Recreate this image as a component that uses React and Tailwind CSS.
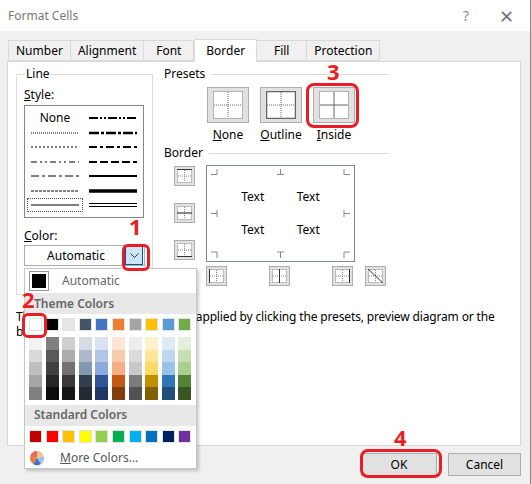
import React from "react";

const font = { fontFamily: '"Segoe UI", "Noto Sans", "Open Sans", sans-serif' };

const THEME = ["#ffffff", "#000000", "#e7e6e6", "#44546a", "#4472c4", "#ed7d31", "#a5a5a5", "#ffc000", "#5b9bd5", "#70ad47"];
const SHADES = [
  ["#f2f2f2", "#d9d9d9", "#bfbfbf", "#a6a6a6", "#808080"],
  ["#7f7f7f", "#595959", "#404040", "#262626", "#0d0d0d"],
  ["#d0cece", "#aeabab", "#767171", "#3b3838", "#171616"],
  ["#d6dce4", "#adb9ca", "#8497b0", "#333f4f", "#222b35"],
  ["#d9e1f2", "#b4c6e7", "#8ea9db", "#305496", "#203764"],
  ["#fce4d6", "#f8cbad", "#f4b084", "#c65911", "#833c0c"],
  ["#ededed", "#dbdbdb", "#c9c9c9", "#7b7b7b", "#525252"],
  ["#fff2cc", "#ffe699", "#ffd966", "#bf8f00", "#806000"],
  ["#ddebf7", "#bdd7ee", "#9bc2e6", "#2f75b5", "#1f4e78"],
  ["#e2efda", "#c6e0b4", "#a9d08e", "#548235", "#375623"],
];
const STANDARD = ["#c00000", "#ff0000", "#ffc000", "#ffff00", "#92d050", "#00b050", "#00b0f0", "#0070c0", "#002060", "#7030a0"];

const TABS = ["Number", "Alignment", "Font", "Border", "Fill", "Protection"];

// left and right columns of the line style list
const LEFT = [null, ["1 1", 1], ["2 2", 1], ["6 3 2 3 2 3", 1], ["8 3 3 3", 1], ["3 1", 1], ["", 1]];
const RIGHT = [["9 2 2 2 2 2", 2], ["10 2 3 2", 2.5], ["8 3 3 3", 2], ["8 3", 2], ["", 2], ["", 3.5], ["double", 1]];

function StyleLine({ spec }) {
  if (!spec) return <span className="block w-full text-center text-[12px] leading-none">None</span>;
  const [dash, w] = spec;
  if (dash === "double")
    return (
      <svg width="48" height="6">
        <line x1="0" y1="1.5" x2="48" y2="1.5" stroke="#000" strokeWidth="1" />
        <line x1="0" y1="4.5" x2="48" y2="4.5" stroke="#000" strokeWidth="1" />
      </svg>
    );
  return (
    <svg width="48" height="6">
      <line x1="0" y1="3" x2="48" y2="3" stroke="#000" strokeWidth={w} strokeDasharray={dash || undefined} />
    </svg>
  );
}

function Preset({ kind }) {
  const outline = kind === "outline";
  const inside = kind === "inside";
  return (
    <div className="w-[42px] h-[36px] bg-[#e1e1e1] border border-[#adadad] flex items-center justify-center">
      <svg width="30" height="28">
        <rect x="0.5" y="0.5" width="29" height="27" fill="#fff" stroke={outline ? "#666" : "#777"} strokeWidth={outline ? 1.5 : 1} strokeDasharray={outline ? undefined : "1 1"} />
        <line x1="15" y1="1" x2="15" y2="27" stroke="#666" strokeDasharray={inside ? undefined : "1 1"} />
        <line x1="1" y1="14" x2="29" y2="14" stroke="#666" strokeDasharray={inside ? undefined : "1 1"} />
      </svg>
    </div>
  );
}

function SideBtn({ line }) {
  return (
    <div className="w-[21px] h-[20px] bg-[#e1e1e1] border border-[#adadad] flex items-center justify-center">
      <svg width="15" height="14">
        <rect x="0.5" y="0.5" width="14" height="13" fill="#fff" stroke="#888" strokeDasharray="1 1" />
        <line x1="7.5" y1="1" x2="7.5" y2="13" stroke="#888" strokeDasharray="1 1" />
        <line x1="1" y1="7" x2="14" y2="7" stroke="#888" strokeDasharray="1 1" />
        {line === "top" && <line x1="0" y1="0.5" x2="15" y2="0.5" stroke="#333" />}
        {line === "mid" && <line x1="0" y1="7" x2="15" y2="7" stroke="#333" />}
        {line === "bottom" && <line x1="0" y1="13.5" x2="15" y2="13.5" stroke="#333" />}
        {line === "left" && <line x1="0.5" y1="0" x2="0.5" y2="14" stroke="#333" />}
        {line === "center" && <line x1="7.5" y1="0" x2="7.5" y2="14" stroke="#333" />}
        {line === "right" && <line x1="14.5" y1="0" x2="14.5" y2="14" stroke="#333" />}
        {line === "diag" && <line x1="0" y1="0" x2="15" y2="14" stroke="#333" />}
      </svg>
    </div>
  );
}

// little corner/tick marks around the preview box
function Tick({ d, cls }) {
  return (
    <svg width="7" height="7" className={`absolute ${cls}`}>
      <path d={d} fill="none" stroke="#888" />
    </svg>
  );
}

function Swatch({ c }) {
  return <div className="w-[13px] h-[13px] border border-[#e2e2e2]" style={{ background: c }} />;
}

export default function App() {
  return (
    <div className="relative w-[531px] h-[484px] bg-[#f0f0f0] text-[12px] text-black overflow-hidden border-r border-[#888]" style={font}>
      {/* title bar */}
      <div className="h-[31px] bg-white flex items-center pl-[8px] pr-[16px]">
        <span className="text-[12px] text-[#777]">Format Cells</span>
        <span className="ml-auto text-[14px] text-[#888]">?</span>
        <span className="ml-[30px] text-[18px] text-[#777] font-light leading-none">✕</span>
      </div>

      <div className="pl-[7px] pr-[9px] pt-[7px]">
        {/* tabs */}
        <div className="flex items-end h-[23px] pl-[1px]">
          {TABS.map((t) =>
            t === "Border" ? (
              <div key={t} className="h-[23px] px-[11px] bg-white border border-b-0 border-[#d9d9d9] -mb-[1px] relative z-10 flex items-center">{t}</div>
            ) : (
              <div key={t} className="h-[21px] px-[7px] border border-[#d9d9d9] border-l-0 first:border-l bg-[#f0f0f0] flex items-center min-w-[50px] justify-center">{t}</div>
            )
          )}
        </div>

        {/* panel */}
        <div className="h-[385px] bg-white border border-[#d9d9d9] pl-[8px] pt-[3px]">
          <div className="flex">
            {/* Line group */}
            <fieldset className="w-[137px] h-[230px] border border-[#dcdcdc] px-[7px]">
              <legend className="ml-[1px] px-[1px]">Line</legend>
              <div className="mt-[3px]"><u>S</u>tyle:</div>
              <div className="mt-[1px] w-[120px] h-[113px] border border-[#828790] px-[3px] py-[6px] grid grid-cols-2 gap-x-[4px]">
                <div className="flex flex-col justify-between h-full">
                  {LEFT.map((s, i) => (
                    <div key={i} className={`h-[12px] flex items-center justify-center ${i === 6 ? "outline outline-1 outline-dotted outline-[#555]" : ""}`}>
                      <StyleLine spec={s} />
                    </div>
                  ))}
                </div>
                <div className="flex flex-col justify-between h-full">
                  {RIGHT.map((s, i) => (
                    <div key={i} className="h-[12px] flex items-center justify-center">
                      <StyleLine spec={s} />
                    </div>
                  ))}
                </div>
              </div>
              <div className="mt-[9px]"><u>C</u>olor:</div>
              <div className="w-[121px] h-[21px] border border-[#adadad] bg-white flex items-center">
                <span className="flex-1 text-center pl-[2px]">Automatic</span>
                <div className="w-[18px] h-[19px] mr-[1px] bg-[#cce4f7] border border-[#005499] flex items-center justify-center">
                  <svg width="9" height="6"><path d="M0.5 0.5 L4.5 4.5 L8.5 0.5" fill="none" stroke="#333" /></svg>
                </div>
              </div>
            </fieldset>

            {/* right column */}
            <div className="ml-[11px] w-[225px]">
              <div className="flex items-center gap-[6px]"><span>Presets</span><div className="flex-1 h-px bg-[#dcdcdc]" /></div>
              <div className="flex gap-[11px] ml-[43px] mt-[4px]">
                {[["none", "N", "one"], ["outline", "O", "utline"], ["inside", "I", "nside"]].map(([k, a, b]) => (
                  <div key={k} className="flex flex-col items-center">
                    <Preset kind={k} />
                    <span className="mt-[3px]"><u>{a}</u>{b}</span>
                  </div>
                ))}
              </div>
              <div className="flex items-center gap-[6px]"><span>Border</span><div className="flex-1 h-px bg-[#dcdcdc]" /></div>
              <div className="flex mt-[3px] ml-[10px]">
                <div className="flex flex-col gap-[17px] pt-[1px]">
                  <SideBtn line="top" />
                  <SideBtn line="mid" />
                  <SideBtn line="bottom" />
                </div>
                <div className="ml-[11px]">
                  <div className="relative w-[149px] h-[97px] border border-[#828790] bg-white grid grid-cols-2 grid-rows-2 px-[18px] py-[14px] text-[12px]">
                    <span className="flex items-center justify-center">Text</span>
                    <span className="flex items-center justify-center">Text</span>
                    <span className="flex items-center justify-center">Text</span>
                    <span className="flex items-center justify-center">Text</span>
                    <Tick cls="left-[4px] top-[3px]" d="M6 0 V5.5 H0" />
                    <Tick cls="left-[70px] top-[3px]" d="M3.5 0 V5.5 M0 5.5 H7" />
                    <Tick cls="right-[4px] top-[3px]" d="M1 0 V5.5 H7" />
                    <Tick cls="left-[4px] top-[44px]" d="M6 0 V7 M0 3.5 H6" />
                    <Tick cls="right-[4px] top-[44px]" d="M1 0 V7 M1 3.5 H7" />
                    <Tick cls="left-[4px] bottom-[3px]" d="M0 1 H6 V7" />
                    <Tick cls="left-[70px] bottom-[3px]" d="M0 1 H7 M3.5 1 V7" />
                    <Tick cls="right-[4px] bottom-[3px]" d="M7 1 H1 V7" />
                  </div>
                  <div className="flex mt-[4px]">
                    <SideBtn line="left" />
                    <div className="ml-[42px]"><SideBtn line="center" /></div>
                    <div className="ml-[42px]"><SideBtn line="right" /></div>
                    <div className="ml-[12px]"><SideBtn line="diag" /></div>
                  </div>
                </div>
              </div>
            </div>
          </div>
          <p className="mt-[14px] leading-[15px] tracking-[-0.15px]">
            The selected border style can be applied by clicking the presets, preview diagram or the buttons above.
          </p>
        </div>

        {/* buttons */}
        <div className="flex justify-end gap-[11px] mt-[7px]">
          <button className="w-[76px] h-[23px] bg-[#e1e1e1] border border-[#adadad]">OK</button>
          <button className="w-[73px] h-[23px] bg-[#e1e1e1] border border-[#adadad]">Cancel</button>
        </div>
      </div>

      {/* color popup */}
      <div className="absolute left-[24px] top-[268px] w-[173px] h-[201px] bg-white border border-[#c6c6c6] shadow-[2px_2px_3px_rgba(0,0,0,0.2)]">
        <div className="flex items-center h-[24px] pl-[4px]">
          <div className="w-[20px] h-[20px] border border-[#999] p-[2px]"><div className="w-full h-full bg-black" /></div>
          <span className="ml-[13px] text-[#666]">Automatic</span>
        </div>
        <div className="h-[21px] bg-[#e8e8e8] flex items-center pl-[9px] font-semibold text-[#666]">Theme Colors</div>
        <div className="flex gap-[3.6px] pl-[4px] mt-[4px]">
          {THEME.map((c) => <Swatch key={c} c={c} />)}
        </div>
        <div className="flex gap-[3.6px] pl-[4px] mt-[6px]">
          {SHADES.map((col, i) => (
            <div key={i} className="flex flex-col">
              {col.map((c) => <div key={c} className="w-[13px] h-[12.6px]" style={{ background: c }} />)}
            </div>
          ))}
        </div>
        <div className="h-[21px] bg-[#e8e8e8] flex items-center pl-[9px] mt-[5px] font-semibold text-[#666]">Standard Colors</div>
        <div className="flex gap-[3.6px] pl-[4px] mt-[4px]">
          {STANDARD.map((c) => <Swatch key={c} c={c} />)}
        </div>
        <div className="flex items-center mt-[6px] pl-[4px]">
          <svg width="16" height="16" viewBox="0 0 16 16">
            <path d="M8 8 L8 1 A7 7 0 0 1 14.5 6 Z" fill="#f2c57c" />
            <path d="M8 8 L14.5 6 A7 7 0 0 1 12 14 Z" fill="#9bc2e6" />
            <path d="M8 8 L12 14 A7 7 0 0 1 4 14 Z" fill="#4472c4" />
            <path d="M8 8 L4 14 A7 7 0 0 1 1.2 6.5 Z" fill="#ed7d31" />
            <path d="M8 8 L1.2 6.5 A7 7 0 0 1 8 1 Z" fill="#e26b5b" />
          </svg>
          <span className="ml-[15px] text-[#555]"><u>M</u>ore Colors...</span>
        </div>
      </div>

      {/* annotations */}
      <div className="absolute left-[122px] top-[244px] w-[28px] h-[27px] border-[3px] border-[#ec1c24] rounded-[6px]" />
      <span className="absolute left-[129px] top-[215px] text-[22px] font-bold text-[#ec1c24] leading-none">1</span>
      <div className="absolute left-[22px] top-[313px] w-[25px] h-[25px] border-[3px] border-[#ec1c24] rounded-[6px]" />
      <span className="absolute left-[22px] top-[288px] text-[22px] font-bold text-[#ec1c24] leading-none">2</span>
      <div className="absolute left-[306px] top-[83px] w-[53px] h-[45px] border-[3px] border-[#ec1c24] rounded-[8px]" />
      <span className="absolute left-[327px] top-[60px] text-[22px] font-bold text-[#ec1c24] leading-none">3</span>
      <div className="absolute left-[360px] top-[449px] w-[82px] h-[29px] border-[3px] border-[#ec1c24] rounded-[8px]" />
      <span className="absolute left-[394px] top-[426px] text-[22px] font-bold text-[#ec1c24] leading-none">4</span>
    </div>
  );
}
